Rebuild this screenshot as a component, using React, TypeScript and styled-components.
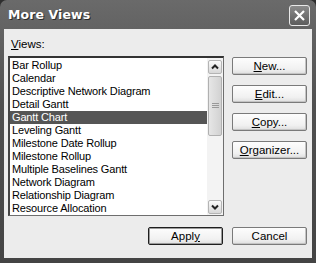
import React, { useState } from 'react';
import styled, { createGlobalStyle } from 'styled-components';

const GlobalStyle = createGlobalStyle`
  html, body {
    margin: 0;
    padding: 0;
    background: #2e2e2e;
  }
  * {
    box-sizing: border-box;
  }
`;

const Window = styled.div`
  width: 316px;
  height: 263px;
  display: flex;
  flex-direction: column;
  background: linear-gradient(180deg, #6a6a6a 0%, #505050 40%, #444 100%);
  border-radius: 7px 7px 0 0;
  padding: 0 4px 5px 4px;
  font-family: 'Liberation Sans', Arial, sans-serif;
  font-size: 11px;
  color: #000;
`;

const TitleBar = styled.div`
  height: 29px;
  flex: none;
  display: flex;
  align-items: center;
  justify-content: space-between;
  padding: 0 2px 0 4px;
`;

const Title = styled.div`
  font-family: 'DejaVu Sans', Verdana, sans-serif;
  font-weight: bold;
  font-size: 12.5px;
  color: #fff;
  text-shadow: 1px 1px 0 #2a2a2a;
  letter-spacing: 0.1px;
`;

const CloseButton = styled.div`
  width: 21px;
  height: 21px;
  border: 1px solid #e8e8e8;
  border-radius: 3px;
  background: linear-gradient(180deg, #8a8a8a 0%, #5c5c5c 100%);
  display: flex;
  align-items: center;
  justify-content: center;
  margin-top: 2px;
`;

const Body = styled.div`
  flex: 1;
  background: #ececec;
  padding: 9px 5px 0 4px;
  display: grid;
  grid-template-columns: 216px 75px;
  grid-template-rows: 18px 160px auto;
  column-gap: 8px;
`;

const Label = styled.div`
  grid-column: 1;
  padding-left: 3px;
  line-height: 13px;
  font-size: 11.5px;
`;

const U = styled.span`
  text-decoration: underline;
`;

const ListBox = styled.div`
  grid-column: 1;
  grid-row: 2;
  display: flex;
  background: #fff;
  border: 1px solid #6e6e6e;
  border-top: 2px solid #333;
  border-left: 2px solid #444;
`;

const Items = styled.div`
  flex: 1;
  padding-top: 1px;
  overflow: hidden;
`;

const Item = styled.div<{ selected?: boolean }>`
  height: 13px;
  line-height: 13px;
  padding-left: 2px;
  font-size: 11px;
  letter-spacing: -0.15px;
  white-space: nowrap;
  background: ${({ selected }) => (selected ? '#555' : 'transparent')};
  color: ${({ selected }) => (selected ? '#fff' : '#000')};
`;

const ScrollBar = styled.div`
  width: 16px;
  flex: none;
  background: #f3f3f3;
  display: flex;
  flex-direction: column;
  padding: 2px 1px 1px 1px;
  gap: 2px;
`;

const ScrollArrow = styled.div`
  height: 14px;
  flex: none;
  border: 1px solid #b4b4b4;
  border-radius: 2px;
  background: linear-gradient(180deg, #fafafa 0%, #d8d8d8 100%);
  display: flex;
  align-items: center;
  justify-content: center;
`;

const Thumb = styled.div`
  height: 60px;
  flex: none;
  border: 1px solid #b0b0b0;
  border-radius: 2px;
  background: linear-gradient(90deg, #e6e6e6 0%, #d2d2d2 100%);
  display: flex;
  align-items: center;
  justify-content: center;
`;

const Track = styled.div`
  flex: 1;
`;

const Side = styled.div`
  grid-column: 2;
  grid-row: 2;
  display: flex;
  flex-direction: column;
  gap: 10px;
  padding-top: 1px;
`;

const Button = styled.div<{ primary?: boolean }>`
  height: 18px;
  width: 75px;
  display: flex;
  align-items: center;
  justify-content: center;
  font-size: 11.5px;
  border: 1px solid ${({ primary }) => (primary ? '#1e1e1e' : '#7a7a7a')};
  box-shadow: ${({ primary }) =>
    primary ? 'inset 0 0 0 1px #9a9a9a' : 'inset -1px -1px 0 #c4c4c4'};
  border-radius: 2px;
  background: linear-gradient(180deg, #fdfdfd 0%, #f1f1f1 70%, #dedede 100%);
`;

const Footer = styled.div`
  grid-column: 1 / span 2;
  grid-row: 3;
  display: flex;
  justify-content: flex-end;
  gap: 9px;
  padding-top: 11px;
`;

const Grip = () => (
  <svg width="7" height="6" viewBox="0 0 7 6">
    {[0, 2, 4].map(y => (
      <line key={y} x1="0" y1={y + 0.5} x2="7" y2={y + 0.5} stroke="#999" strokeWidth="1" />
    ))}
  </svg>
);

const Chevron = ({ up }: { up?: boolean }) => (
  <svg width="8" height="6" viewBox="0 0 8 6">
    <path
      d={up ? 'M1 4.5 L4 1.5 L7 4.5' : 'M1 1.5 L4 4.5 L7 1.5'}
      fill="none"
      stroke="#222"
      strokeWidth="2"
    />
  </svg>
);

const views = [
  'Bar Rollup',
  'Calendar',
  'Descriptive Network Diagram',
  'Detail Gantt',
  'Gantt Chart',
  'Leveling Gantt',
  'Milestone Date Rollup',
  'Milestone Rollup',
  'Multiple Baselines Gantt',
  'Network Diagram',
  'Relationship Diagram',
  'Resource Allocation',
];

const App: React.FC = () => {
  const [selected, setSelected] = useState('Gantt Chart');

  return (
    <>
      <GlobalStyle />
      <Window>
        <TitleBar>
          <Title>More Views</Title>
          <CloseButton>
            <svg width="13" height="13" viewBox="0 0 13 13">
              <path d="M2 2 L11 11 M11 2 L2 11" stroke="#fff" strokeWidth="2.2" />
            </svg>
          </CloseButton>
        </TitleBar>
        <Body>
          <Label>
            <U>V</U>iews:
          </Label>
          <ListBox>
            <Items>
              {views.map(v => (
                <Item key={v} selected={v === selected} onClick={() => setSelected(v)}>
                  {v}
                </Item>
              ))}
            </Items>
            <ScrollBar>
              <ScrollArrow>
                <Chevron up />
              </ScrollArrow>
              <Thumb>
                <Grip />
              </Thumb>
              <Track />
              <ScrollArrow>
                <Chevron />
              </ScrollArrow>
            </ScrollBar>
          </ListBox>
          <Side>
            <Button>
              <span><U>N</U>ew...</span>
            </Button>
            <Button>
              <span><U>E</U>dit...</span>
            </Button>
            <Button>
              <span><U>C</U>opy...</span>
            </Button>
            <Button>
              <span><U>O</U>rganizer...</span>
            </Button>
          </Side>
          <Footer>
            <Button primary>
              <span>Appl<U>y</U></span>
            </Button>
            <Button>Cancel</Button>
          </Footer>
        </Body>
      </Window>
    </>
  );
};

export default App;
